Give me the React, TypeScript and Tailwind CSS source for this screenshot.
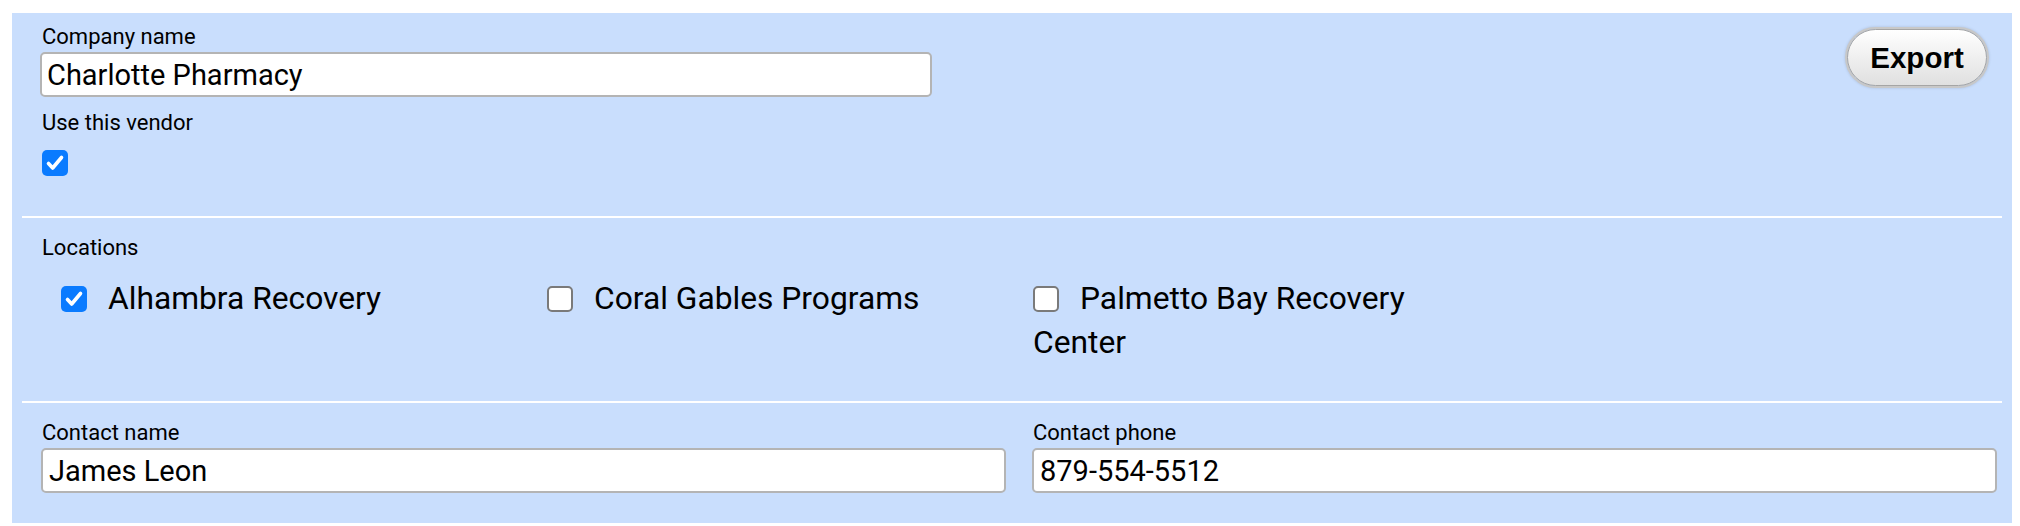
import { useState } from 'react';

type Location = { id: string; name: string };

const LOCATIONS: Location[] = [
  { id: 'alhambra', name: 'Alhambra Recovery' },
  { id: 'coral', name: 'Coral Gables Programs' },
  { id: 'palmetto', name: 'Palmetto Bay Recovery Center' },
];

// inline-block with no text inside, so its baseline is the bottom edge
function Box({ checked, shift = '' }: { checked: boolean; shift?: string }) {
  if (checked) {
    return (
      <span className={`inline-block w-[26px] h-[26px] rounded-[5px] bg-[#0a7bff] ${shift}`}>
        <svg className="block" width="26" height="26" viewBox="0 0 26 26" fill="none">
          <path d="M6.5 13.5l4.2 4.5L19.5 7.5" stroke="#fff" strokeWidth="3.6" strokeLinecap="round" strokeLinejoin="round" />
        </svg>
      </span>
    );
  }
  return <span className={`inline-block w-[26px] h-[26px] rounded-[5px] bg-white border-2 border-[#7a7a7a] ${shift}`} />;
}

function Field({ label, value }: { label: string; value: string }) {
  return (
    <div>
      <div className="text-[22px] leading-[26px] ml-[1px]">{label}</div>
      <input
        defaultValue={value}
        className="mt-[2px] block w-full h-[45px] bg-white border-2 border-[#b4b4b4] rounded-[5px] px-[6px] text-[29px] text-black outline-none font-['Roboto',sans-serif]"
      />
    </div>
  );
}

export default function App() {
  const [useVendor, setUseVendor] = useState(true);
  const [picked, setPicked] = useState<Record<string, boolean>>({ alhambra: true });

  return (
    <div className="w-full h-[526px] bg-white pt-[13px] pl-[12px] pr-[8px] font-['Roboto',sans-serif] text-black">
      <div className="bg-[#c9defd] px-[10px] h-[510px]">
        {/* vendor */}
        <section className="flex justify-between items-start pt-[11px] pl-[18px] pr-[15px] pb-[40px] border-b-2 border-white">
          <div>
            <div className="text-[22px] leading-[26px] ml-[2px]">Company name</div>
            <input
              defaultValue="Charlotte Pharmacy"
              className="mt-[2px] block w-[892px] h-[45px] bg-white border-2 border-[#b4b4b4] rounded-[5px] px-[5px] text-[29px] text-black outline-none font-['Roboto',sans-serif]"
            />
            <div className="mt-[13px] text-[22px] leading-[26px] ml-[2px]">Use this vendor</div>
            <button className="mt-[14px] ml-[2px] flex w-[26px] h-[26px]" onClick={() => setUseVendor(!useVendor)}>
              <Box checked={useVendor} />
            </button>
          </div>
          <button className="mt-[5px] w-[140px] h-[57px] rounded-full border border-[#a5a5a5] bg-linear-to-b from-white to-[#e0e0e0] shadow-[0_0_0_2px_#c8c8c8,0_0_3px_2px_rgba(0,0,0,0.15)] font-['Liberation_Sans',Arial,sans-serif] font-bold text-[29.5px] leading-none text-black">
            Export
          </button>
        </section>

        {/* locations */}
        <section className="pt-[17px] pl-[20px] pb-[36px] border-b-2 border-white">
          <div className="text-[22px] leading-[26px]">Locations</div>
          <div className="mt-[16px] pl-[19px] flex gap-[46px]">
            {LOCATIONS.map((loc) => (
              <label
                key={loc.id}
                className="block w-[440px] text-[31.75px] leading-[44px] cursor-pointer"
                onClick={() => setPicked({ ...picked, [loc.id]: !picked[loc.id] })}
              >
                <span className="mr-[21px]">
                  <Box checked={!!picked[loc.id]} shift="align-[-3px]" />
                </span>
                {loc.name}
              </label>
            ))}
          </div>
        </section>

        {/* contact */}
        <section className="pt-[17px] pl-[19px] pr-[5px] grid grid-cols-2 gap-x-[26px]">
          <Field label="Contact name" value="James Leon" />
          <Field label="Contact phone" value="879-554-5512" />
        </section>
      </div>
    </div>
  );
}
